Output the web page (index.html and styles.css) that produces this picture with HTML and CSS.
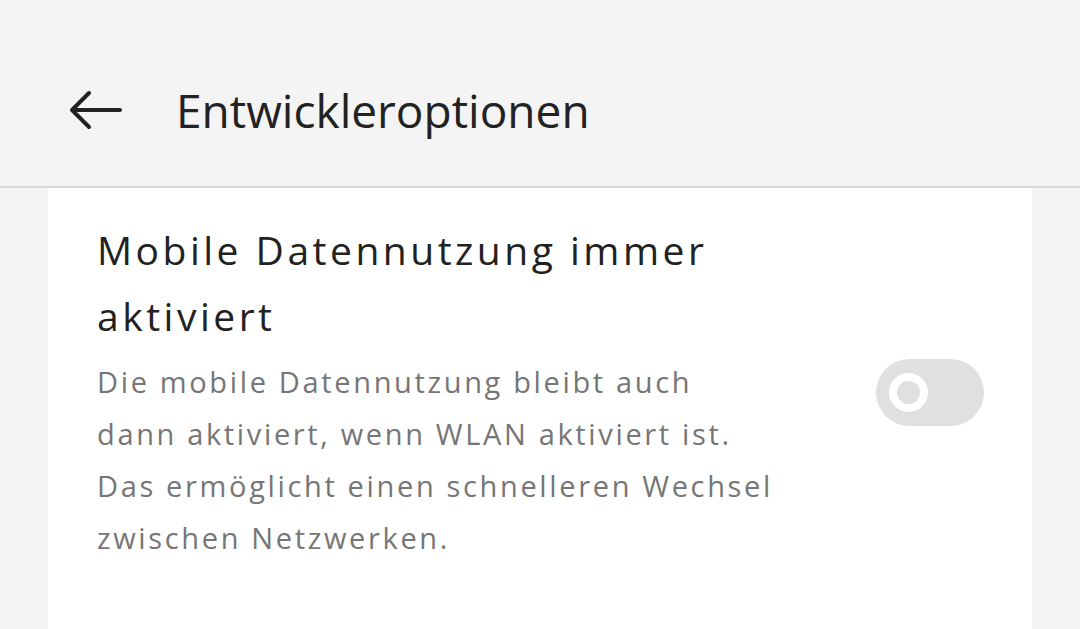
FILE: index.html
```html
<!DOCTYPE html>
<html>
<head>
	<meta charset="utf-8">
	<title>Entwickleroptionen</title>
	<meta name="viewport" content="width=device-width, initial-scale=1.0" />
	<link rel="stylesheet" href="styles.css">
</head>
<body>
	<header class="topbar">
		<button class="back" aria-label="Zurück">
			<svg width="54" height="40" viewBox="0 0 54 40">
				<path d="M52 20H4M21 3L4 20L21 37" fill="none" stroke="#222" stroke-width="4" stroke-linecap="round" stroke-linejoin="round"/>
			</svg>
		</button>
		<h1 class="title">Entwickleroptionen</h1>
	</header>
	<main class="card">
		<div class="setting">
			<div class="setting-text">
				<p class="setting-title">Mobile Datennutzung immer aktiviert</p>
				<p class="setting-desc">Die mobile Datennutzung bleibt auch<br>dann aktiviert, wenn WLAN aktiviert ist.<br>Das ermöglicht einen schnelleren Wechsel<br>zwischen Netzwerken.</p>
			</div>
			<div class="switch">
				<span class="knob"></span>
			</div>
		</div>
	</main>
</body>
</html>
```

FILE: styles.css
```css
html, body {
	margin: 0;
	height: 100%;
}
body {
	background: #f4f4f4;
	font-family: "Open Sans", Lato, sans-serif;
	font-variant-ligatures: none;
	overflow: hidden;
}
.topbar {
	height: 152px;
	padding: 34px 0 0 68px;
	border-bottom: 2px solid #d8d8d8;
	display: flex;
	align-items: center;
}
.back {
	background: none;
	border: 0;
	padding: 0;
	width: 54px;
	height: 40px;
}
.title {
	margin: 0 0 0 54px;
	font-weight: 400;
	font-size: 46px;
	color: #222;
}
.card {
	margin: 0 48px;
	background: white;
	height: calc(100% - 188px);
	padding: 29px 48px 0 49px;
	box-sizing: border-box;
}
.setting {
	display: flex;
	align-items: center;
}
.setting-text {
	flex: 1;
}
.setting-title {
	margin: 0;
	font-size: 39px;
	line-height: 66px;
	letter-spacing: 3.5px;
	color: #222;
	width: 640px;
}
.setting-desc {
	margin: 7px 0 0;
	font-size: 29px;
	line-height: 52px;
	letter-spacing: 2.65px;
	color: #767676;
	white-space: nowrap;
}
.switch {
	width: 108px;
	height: 67px;
	border-radius: 34px;
	background: #e0e0e0;
	display: flex;
	align-items: center;
	padding-left: 13px;
	box-sizing: border-box;
	margin-top: 3px;
}
.knob {
	width: 23px;
	height: 23px;
	border-radius: 50%;
	background: #e0e0e0;
	border: 8px solid white;
}
```
